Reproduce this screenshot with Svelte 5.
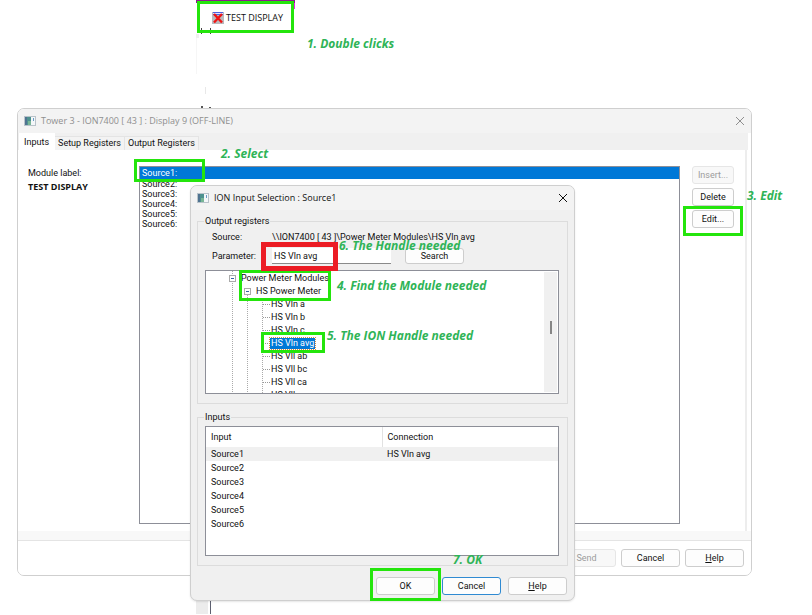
<script lang="ts">
    interface Mark {
        x: number;
        y: number;
        width: number;
        height: number;
        red?: boolean;
    }

    const sources = ['Source1', 'Source2', 'Source3', 'Source4', 'Source5', 'Source6'];
    const tabs = ['Inputs', 'Setup Registers', 'Output Registers'];
    const handles = ['HS Vln a', 'HS Vln b', 'HS Vln c', 'HS Vln avg', 'HS Vll ab', 'HS Vll bc', 'HS Vll ca', 'HS Vll avg'];

    const marks: Mark[] = [
        { x: 197, y: 1, width: 97, height: 32 },
        { x: 134, y: 159, width: 71, height: 23 },
        { x: 683, y: 206, width: 60, height: 30 },
        { x: 239, y: 270, width: 92, height: 31 },
        { x: 261, y: 332, width: 64, height: 21 },
        { x: 370, y: 568, width: 71, height: 33 },
        { x: 261, y: 242, width: 77, height: 29, red: true },
    ];

    const notes = [
        { x: 307, y: 36, text: '1. Double clicks' },
        { x: 221, y: 146, text: '2. Select' },
        { x: 747, y: 188, text: '3. Edit' },
        { x: 337, y: 278, text: '4. Find the Module needed' },
        { x: 327, y: 328, text: '5. The ION Handle needed' },
        { x: 339, y: 238, text: '6. The Handle needed' },
        { x: 453, y: 552, text: '7. OK' },
    ];

    let activeTab = 'Inputs';
    let selectedSource = 'Source1';
    let selectedHandle = 'HS Vln avg';
    let parameter = 'HS Vln avg';
</script>

{#snippet windowIcon()}
    <svg class="window-icon" viewBox="0 0 12 10" aria-hidden="true">
        <rect x="0.5" y="0.5" width="11" height="9" fill="#f4f7f9" stroke="#b9c3ca" />
        <rect x="1" y="1" width="6" height="8" fill="#4d918f" />
        <path d="M1 1h2v8H1z" fill="#4f7390" />
        <path d="M4 5h3v4H4z" fill="#79b596" />
        <path d="M9.5 2v3" stroke="#6a9cc4" />
    </svg>
{/snippet}

{#snippet closeIcon()}
    <svg class="close-icon" viewBox="0 0 10 10" aria-hidden="true">
        <path d="M1 1l8 8M9 1l-8 8" fill="none" stroke="currentColor" />
    </svg>
{/snippet}

<main class="desktop">
    <div class="canvas-top">
        <div class="module">
            <svg class="module-icon" viewBox="0 0 12 12" aria-hidden="true">
                <rect width="12" height="12" fill="#b9b9bd" />
                <path d="M1 0h10v3H1z" fill="#4c62e0" />
                <path d="M1 1.5h10" stroke="#dfe3ff" />
                <path d="M2 2l8 8.500M10 2l-8 8.500" stroke="#f01414" stroke-width="2.400" />
            </svg>
            <span>TEST DISPLAY</span>
        </div>
    </div>
    <div class="canvas-ticks"></div>
    <div class="canvas-edge"></div>

    <section class="window" aria-label="Display 9">
        <header class="title-bar inactive">
            {@render windowIcon()}
            <h1>Tower 3 - ION7400 [ 43 ] : Display 9 (OFF-LINE)</h1>
            <button class="close" aria-label="Close window">{@render closeIcon()}</button>
        </header>
        <nav class="tabs">
            {#each tabs as tab}
                <button class="tab" class:active={activeTab === tab} on:click={() => (activeTab = tab)}>{tab}</button>
            {/each}
        </nav>
        <div class="tab-page">
            <div class="module-label">
                <p>Module label:</p>
                <strong>TEST DISPLAY</strong>
            </div>
            <ul class="source-list">
                {#each sources as source}
                    <li class:selected={selectedSource === source}>{source}:</li>
                {/each}
            </ul>
            <div class="side-buttons">
                <button class="btn" disabled>Insert...</button>
                <button class="btn">Delete</button>
                <button class="btn">Edit...</button>
            </div>
        </div>
        <footer class="window-footer">
            <button class="btn" disabled>Send</button>
            <button class="btn">Cancel</button>
            <button class="btn"><u>H</u>elp</button>
        </footer>
    </section>

    <section class="dialog" role="dialog" aria-label="ION Input Selection">
        <header class="title-bar">
            {@render windowIcon()}
            <h2>ION Input Selection : Source1</h2>
            <button class="close" aria-label="Close dialog">{@render closeIcon()}</button>
        </header>

        <fieldset class="group">
            <legend>Output registers</legend>
            <div class="field">
                <span class="field-name">Source:</span>
                <span>\\ION7400 [ 43 ]\Power Meter Modules\HS Vln avg</span>
            </div>
            <div class="field">
                <label class="field-name" for="parameter">Parameter:</label>
                <input id="parameter" type="text" bind:value={parameter} />
                <button class="btn">Search</button>
            </div>
            <div class="tree">
                <ul class="tree-items">
                    <li class="node level-1"><span class="toggle"></span><span>Power Meter Modules</span></li>
                    <li class="node level-2"><span class="toggle"></span><span>HS Power Meter</span></li>
                    {#each handles as handle}
                        <li class="node level-3">
                            <span class:selected={selectedHandle === handle}>{handle}</span>
                        </li>
                    {/each}
                </ul>
                <div class="scrollbar"><span class="thumb"></span></div>
            </div>
        </fieldset>

        <fieldset class="group">
            <legend>Inputs</legend>
            <div class="table-box">
                <table>
                    <thead>
                        <tr><th>Input</th><th>Connection</th></tr>
                    </thead>
                    <tbody>
                        {#each sources as source}
                            <tr class:current={selectedSource === source}>
                                <td>{source}</td>
                                <td>{selectedSource === source ? selectedHandle : ''}</td>
                            </tr>
                        {/each}
                    </tbody>
                </table>
            </div>
        </fieldset>

        <footer class="dialog-footer">
            <button class="btn">OK</button>
            <button class="btn default">Cancel</button>
            <button class="btn"><u>H</u>elp</button>
        </footer>
    </section>

    {#each marks as mark}
        <div
            class="mark"
            class:red={mark.red}
            style="left: {mark.x}px; top: {mark.y}px; width: {mark.width}px; height: {mark.height}px"
        ></div>
    {/each}
    {#each notes as note}
        <p class="note" style="left: {note.x}px; top: {note.y}px">{note.text}</p>
    {/each}
</main>

<style>
    :global(body) {
        margin: 0;
        background: #fff;
    }

    .desktop {
        position: relative;
        min-height: 100vh;
        overflow: hidden;
        font-family: Roboto, "Liberation Sans", sans-serif;
        font-size: 9px;
        line-height: 12px;
        color: #111;
    }

    .desktop * {
        box-sizing: border-box;
    }

    h1, h2, p, ul {
        margin: 0;
        padding: 0;
        list-style: none;
    }

    button, input {
        font: inherit;
        color: inherit;
    }

    /* diagram behind the windows */
    .canvas-top {
        position: absolute;
        left: 196px;
        top: 0;
        width: 99px;
        height: 34px;
        padding: 9px 0 0 16px;
        border-top: 3px solid #8d1a8d;
        background: linear-gradient(#f020f0, #f020f0) 100% 0 / 4px 6px no-repeat;
    }

    .module {
        display: flex;
        align-items: center;
        gap: 2px;
        font-family: "Open Sans", sans-serif;
    }

    .module-icon {
        width: 12px;
        height: 12px;
    }

    .canvas-ticks {
        position: absolute;
        left: 196px;
        top: 28px;
        width: 15px;
        height: 81px;
        background:
            linear-gradient(#444, #444) 5px 0 / 1px 6px no-repeat,
            linear-gradient(#444, #444) 14px 0 / 1px 6px no-repeat,
            linear-gradient(#555, #555) 5px 78px / 2px 2px no-repeat,
            linear-gradient(#555, #555) 13px 79px / 2px 2px no-repeat,
            linear-gradient(#eee, #eee) 0 6px / 3px 4px no-repeat,
            linear-gradient(#e8e8e8, #e8e8e8) 9px 59px / 1px 7px no-repeat,
            linear-gradient(#f6f6f6, #f6f6f6) 0 6px / 1px 40px no-repeat;
    }

    .canvas-edge {
        position: absolute;
        left: 196px;
        top: 598px;
        width: 15px;
        height: 16px;
        background: linear-gradient(#ececec, #ececec) 0 0 / 12px 100% no-repeat;
        border-right: 1px solid #5d6070;
    }

    /* windows */
    .window, .dialog {
        position: absolute;
        border: 1px solid #cfcfcf;
        border-radius: 7px;
    }

    .window {
        left: 17px;
        right: 60px;
        top: 108px;
        background: #fff;
        overflow: hidden;
    }

    .dialog {
        left: 190px;
        right: 237px;
        top: 185px;
        padding: 0 6px 5px;
        background: #f0f0f0;
        box-shadow: 0 1px 2px rgba(0, 0, 0, 0.1);
    }

    .title-bar {
        display: flex;
        align-items: center;
        gap: 5px;
        height: 24px;
        padding: 0 6px;
        background: #f3f3f3;
    }

    .dialog .title-bar {
        margin: 0 -6px 5px;
        border-radius: 6px 6px 0 0;
    }

    .title-bar.inactive {
        color: #8f8f8f;
    }

    .title-bar h1, .title-bar h2 {
        flex: 1;
        font-family: "Open Sans", sans-serif;
        font-size: 9px;
        font-weight: 400;
    }

    .window-icon {
        width: 12px;
        height: 10px;
    }

    .close {
        display: flex;
        padding: 0;
        border: 0;
        background: none;
    }

    .close-icon {
        width: 10px;
        height: 10px;
    }

    .tabs {
        display: flex;
        align-items: flex-end;
        height: 17px;
        padding-left: 1px;
        background: #f0f0f0;
        border-right: 3px solid #fff;
    }

    .tab {
        height: 14px;
        padding: 0 3px;
        border: 1px solid #e4e4e4;
        border-width: 1px 1px 0 0;
        background: #f3f3f3;
        line-height: 13px;
    }

    .tab.active {
        height: 17px;
        padding: 0 5px;
        border-color: #fff;
        background: #fff;
        line-height: 14px;
    }

    .tab-page {
        display: grid;
        grid-template-columns: 111px 1fr 42px;
        column-gap: 12px;
        height: 381px;
        margin-right: 4px;
        padding: 16px 11px 6px 10px;
        border-right: 2px solid #ededed;
    }

    .tab-page .source-list {
        margin-left: -12px;
    }

    .module-label p {
        line-height: 14px;
    }

    .module-label strong {
        font-family: "Open Sans", sans-serif;
        line-height: 14px;
    }

    .source-list {
        height: 358px;
        border: 1px solid #8d8f98;
        line-height: 10px;
    }

    .source-list li {
        padding-left: 2px;
    }

    .source-list .selected {
        background: #0078d7;
        color: #fff;
        line-height: 12px;
    }

    .side-buttons {
        display: flex;
        flex-direction: column;
        gap: 4px;
    }

    .btn {
        height: 18px;
        padding: 0;
        border: 1px solid #cdcdcd;
        border-radius: 3px;
        background: #fdfdfd;
        line-height: 14px;
    }

    .btn:disabled {
        border-color: #e6e6e6;
        background: #f8f8f8;
        color: #9c9c9c;
    }

    .btn.default {
        border-color: #2f8ad2;
    }

    .window-footer {
        display: flex;
        justify-content: flex-end;
        gap: 5px;
        padding: 18px 7px 8px;
        background: linear-gradient(#f8f8f8 9px, #e4e4e4 9px, #e4e4e4 10px, #fff 10px);
    }

    .window-footer .btn, .dialog-footer .btn {
        width: 59px;
    }

    /* dialog content */
    .group {
        min-width: 0;
        margin: 0 0 7px;
        padding: 0 8px 9px 7px;
        border: 1px solid #dcdcdc;
    }

    .group legend {
        margin-left: -1px;
        padding: 0 1px;
    }

    .field {
        display: flex;
        align-items: center;
        height: 16px;
        padding-left: 7px;
    }

    .field:first-of-type {
        margin-top: 2px;
    }

    .field + .field {
        margin: 3px 0 6px;
    }

    .field-name {
        width: 60px;
    }

    .field input {
        width: 119px;
        height: 16px;
        padding: 0 2px;
        border: 0;
        border-bottom: 1px solid #8a8a8a;
        background: #fff;
    }

    .field .btn {
        width: 59px;
        height: 16px;
        margin-left: 14px;
        line-height: 12px;
    }

    .tree {
        display: flex;
        height: 124px;
        border: 1px solid #8d8f98;
        background: #fff;
        overflow: hidden;
    }

    .tree-items {
        flex: 1;
        height: 122px;
        padding-top: 1px;
        overflow: hidden;
        line-height: 13px;
        background:
            repeating-linear-gradient(#aaa 0 1px, #fff 1px 2px) 26px 0 / 1px 100% no-repeat,
            repeating-linear-gradient(#aaa 0 1px, #fff 1px 2px) 41px 20px / 1px 100% no-repeat,
            repeating-linear-gradient(#aaa 0 1px, #fff 1px 2px) 56px 27px / 1px 100% no-repeat;
    }

    .node {
        display: flex;
        align-items: center;
        height: 13px;
        white-space: nowrap;
    }

    .level-1 {
        gap: 5px;
        padding-left: 23px;
    }

    .level-2 {
        gap: 5px;
        padding-left: 38px;
    }

    .level-3 {
        padding-left: 57px;
    }

    .level-3::before {
        width: 7px;
        border-top: 1px dotted #999;
        content: "";
    }

    .level-3 span {
        padding: 0 1px;
        line-height: 11px;
    }

    .level-3 .selected {
        outline: 1px dotted #d98c3a;
        background: #0078d7;
        color: #fff;
    }

    .toggle {
        width: 7px;
        height: 7px;
        border: 1px solid #aaa;
        background: linear-gradient(#345fa5, #345fa5) center / 3px 1px no-repeat #fff;
    }

    .scrollbar {
        display: flex;
        align-items: center;
        justify-content: center;
        width: 13px;
        margin: 1px;
        background: #f0f0f0;
    }

    .thumb {
        width: 2px;
        height: 13px;
        margin-bottom: 10px;
        background: #868686;
    }

    .table-box {
        height: 130px;
        margin-top: 3px;
        border: 1px solid #8d8f98;
        background: #fff;
    }

    table {
        width: 100%;
        border-collapse: collapse;
        table-layout: fixed;
    }

    th, td {
        height: 14px;
        padding: 0 5px;
        text-align: left;
        font-weight: 400;
    }

    th {
        height: 20px;
    }

    th + th {
        border-left: 1px solid #e2e2e2;
    }

    .current {
        background: #f0f0f0;
    }

    .dialog-footer {
        display: flex;
        justify-content: flex-end;
        gap: 7px;
        padding: 4px 1px 0 0;
    }

    /* instructions drawn over the windows */
    .mark {
        position: absolute;
        border: 3px solid #24e50c;
        pointer-events: none;
    }

    .mark.red {
        border: 5px solid #ec1c24;
    }

    .note {
        position: absolute;
        font-family: "Open Sans", sans-serif;
        font-size: 12px;
        font-style: italic;
        font-weight: 700;
        line-height: 16px;
        white-space: nowrap;
        color: #2fb457;
    }
</style>
